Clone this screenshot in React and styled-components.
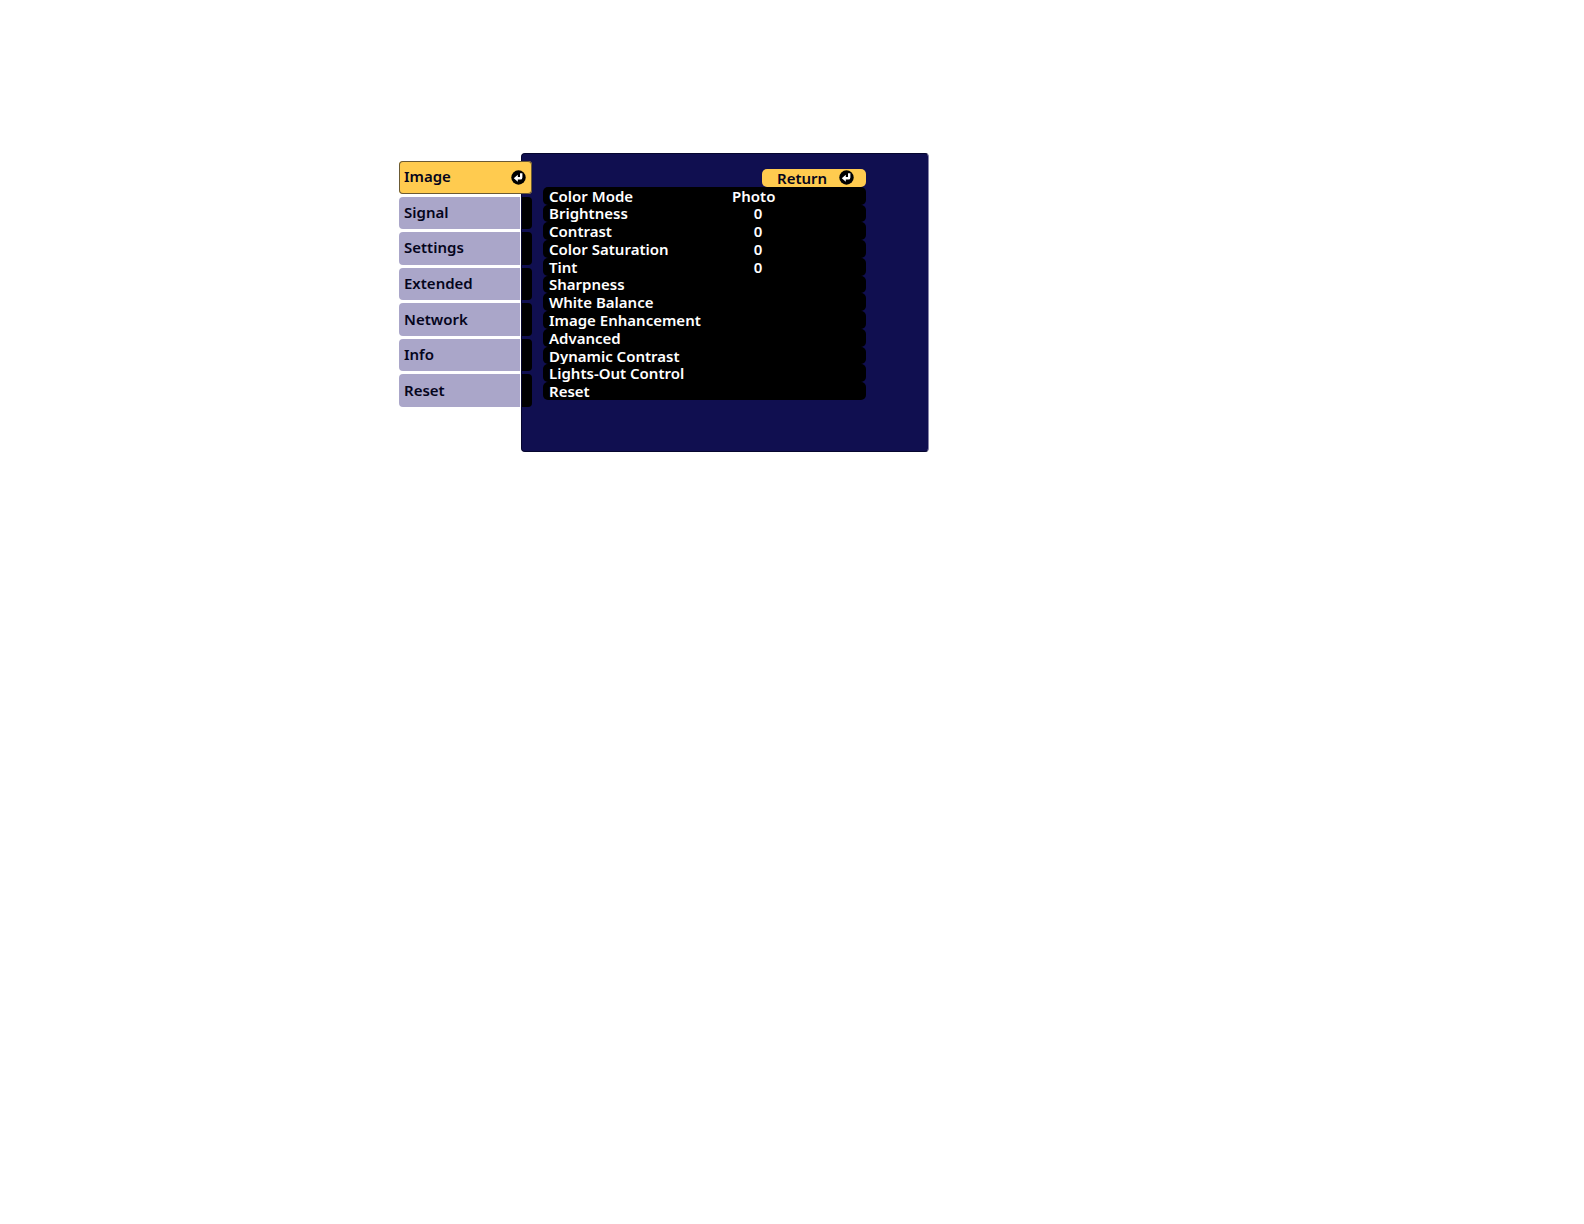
import React, { useState } from "react";
import styled, { createGlobalStyle } from "styled-components";

const tabs = [
  "Image",
  "Signal",
  "Settings",
  "Extended",
  "Network",
  "Info",
  "Reset",
];

const imageSettings = [
  { name: "Color Mode", value: "Photo" },
  { name: "Brightness", value: 0 },
  { name: "Contrast", value: 0 },
  { name: "Color Saturation", value: 0 },
  { name: "Tint", value: 0 },
  { name: "Sharpness" },
  { name: "White Balance" },
  { name: "Image Enhancement" },
  { name: "Advanced" },
  { name: "Dynamic Contrast" },
  { name: "Lights-Out Control" },
  { name: "Reset" },
];

const EnterIcon = () => (
  <Icon viewBox="0 0 15 15" aria-hidden="true">
    <circle cx="7.5" cy="7.5" r="7.2" fill="#000" />
    <path d="M2.8 8.2 L6.8 4.8 V7 H9 V3.2 H11.4 V7.4 Q11.4 9.6 9.2 9.6 H6.8 V11.8 Z" fill="#fff" />
  </Icon>
);

const App = () => {
  const [activeTab, setActiveTab] = useState("Image");

  return (
    <Page>
      <GlobalStyle />
      <Menu>
        <Tabs>
          {tabs.map((tab) => {
            const active = tab === activeTab;
            return (
              <Tab key={tab} $active={active} onClick={() => setActiveTab(tab)}>
                <TabLabel $active={active}>{tab}</TabLabel>
                {active ? <EnterIcon /> : <TabEdge />}
              </Tab>
            );
          })}
        </Tabs>
        <Panel>
          <Return onClick={() => setActiveTab("Image")}>
            Return
            <EnterIcon />
          </Return>
          {imageSettings.map((setting) => (
            <Setting key={setting.name}>
              <span>{setting.name}</span>
              {setting.value !== undefined && (
                <Value $numeric={typeof setting.value === "number"}>
                  {setting.value}
                </Value>
              )}
            </Setting>
          ))}
        </Panel>
      </Menu>
    </Page>
  );
};

const GlobalStyle = createGlobalStyle`
  body {
    margin: 0;
    background: #fff;
  }
`;

const Page = styled.main`
  box-sizing: border-box;
  min-height: 100vh;
  padding: 153px 16px 16px 399px;
  font: 600 15px/16px "Noto Sans", sans-serif;
`;

const Menu = styled.div`
  display: flex;
  max-width: 530px;
`;

const Tabs = styled.nav`
  z-index: 1;
  display: flex;
  flex-direction: column;
  gap: 3px;
  flex: 0 0 133px;
  height: 246px;
  margin: 8px -11px 0 0;
`;

const BaseButton = styled.button`
  display: flex;
  align-items: center;
  flex: 1;
  box-sizing: border-box;
  padding: 0;
  border: 0;
  background: none;
  color: #05051c;
  font: inherit;
  text-align: left;
  cursor: pointer;
`;

const Tab = styled(BaseButton)`
  padding-right: ${(props) => (props.$active ? "6px" : "0")};
  border-radius: 4px;
  background: ${(props) => (props.$active ? "#ffcb4f" : "none")};
  box-shadow: ${(props) => (props.$active ? "inset 0 0 0 1px #6b5a34" : "none")};
`;

const TabLabel = styled.span`
  display: flex;
  align-items: center;
  flex: 1;
  align-self: stretch;
  box-sizing: border-box;
  padding: 0 0 2px 5px;
  border-radius: 4px 0 0 4px;
  background: ${(props) => (props.$active ? "none" : "#aaa6c9")};
`;

const TabEdge = styled.span`
  align-self: stretch;
  width: 10px;
  margin-left: 2px;
  border-radius: 0 4px 4px 0;
  background: #000;
`;

const Panel = styled.section`
  display: flex;
  flex-direction: column;
  flex: 1;
  box-sizing: border-box;
  height: 299px;
  padding: 15px 62px 51px 21px;
  border: 1px solid #06062f;
  border-right-color: #8884a8;
  border-radius: 4px;
  background: #100f50;
`;

const Return = styled(BaseButton)`
  align-self: flex-end;
  justify-content: space-between;
  width: 104px;
  padding: 0 12px 0 15px;
  border-radius: 5px;
  background: #ffcb4f;
`;

const Setting = styled(BaseButton)`
  display: grid;
  grid-template-columns: 183px 1fr;
  padding-left: 6px;
  border-radius: 5px;
  background: #000;
  color: #fff;
`;

const Value = styled.span`
  width: 52px;
  text-align: ${(props) => (props.$numeric ? "center" : "left")};
`;

const Icon = styled.svg`
  flex: none;
  width: 15px;
  height: 15px;
`;

export default App;
